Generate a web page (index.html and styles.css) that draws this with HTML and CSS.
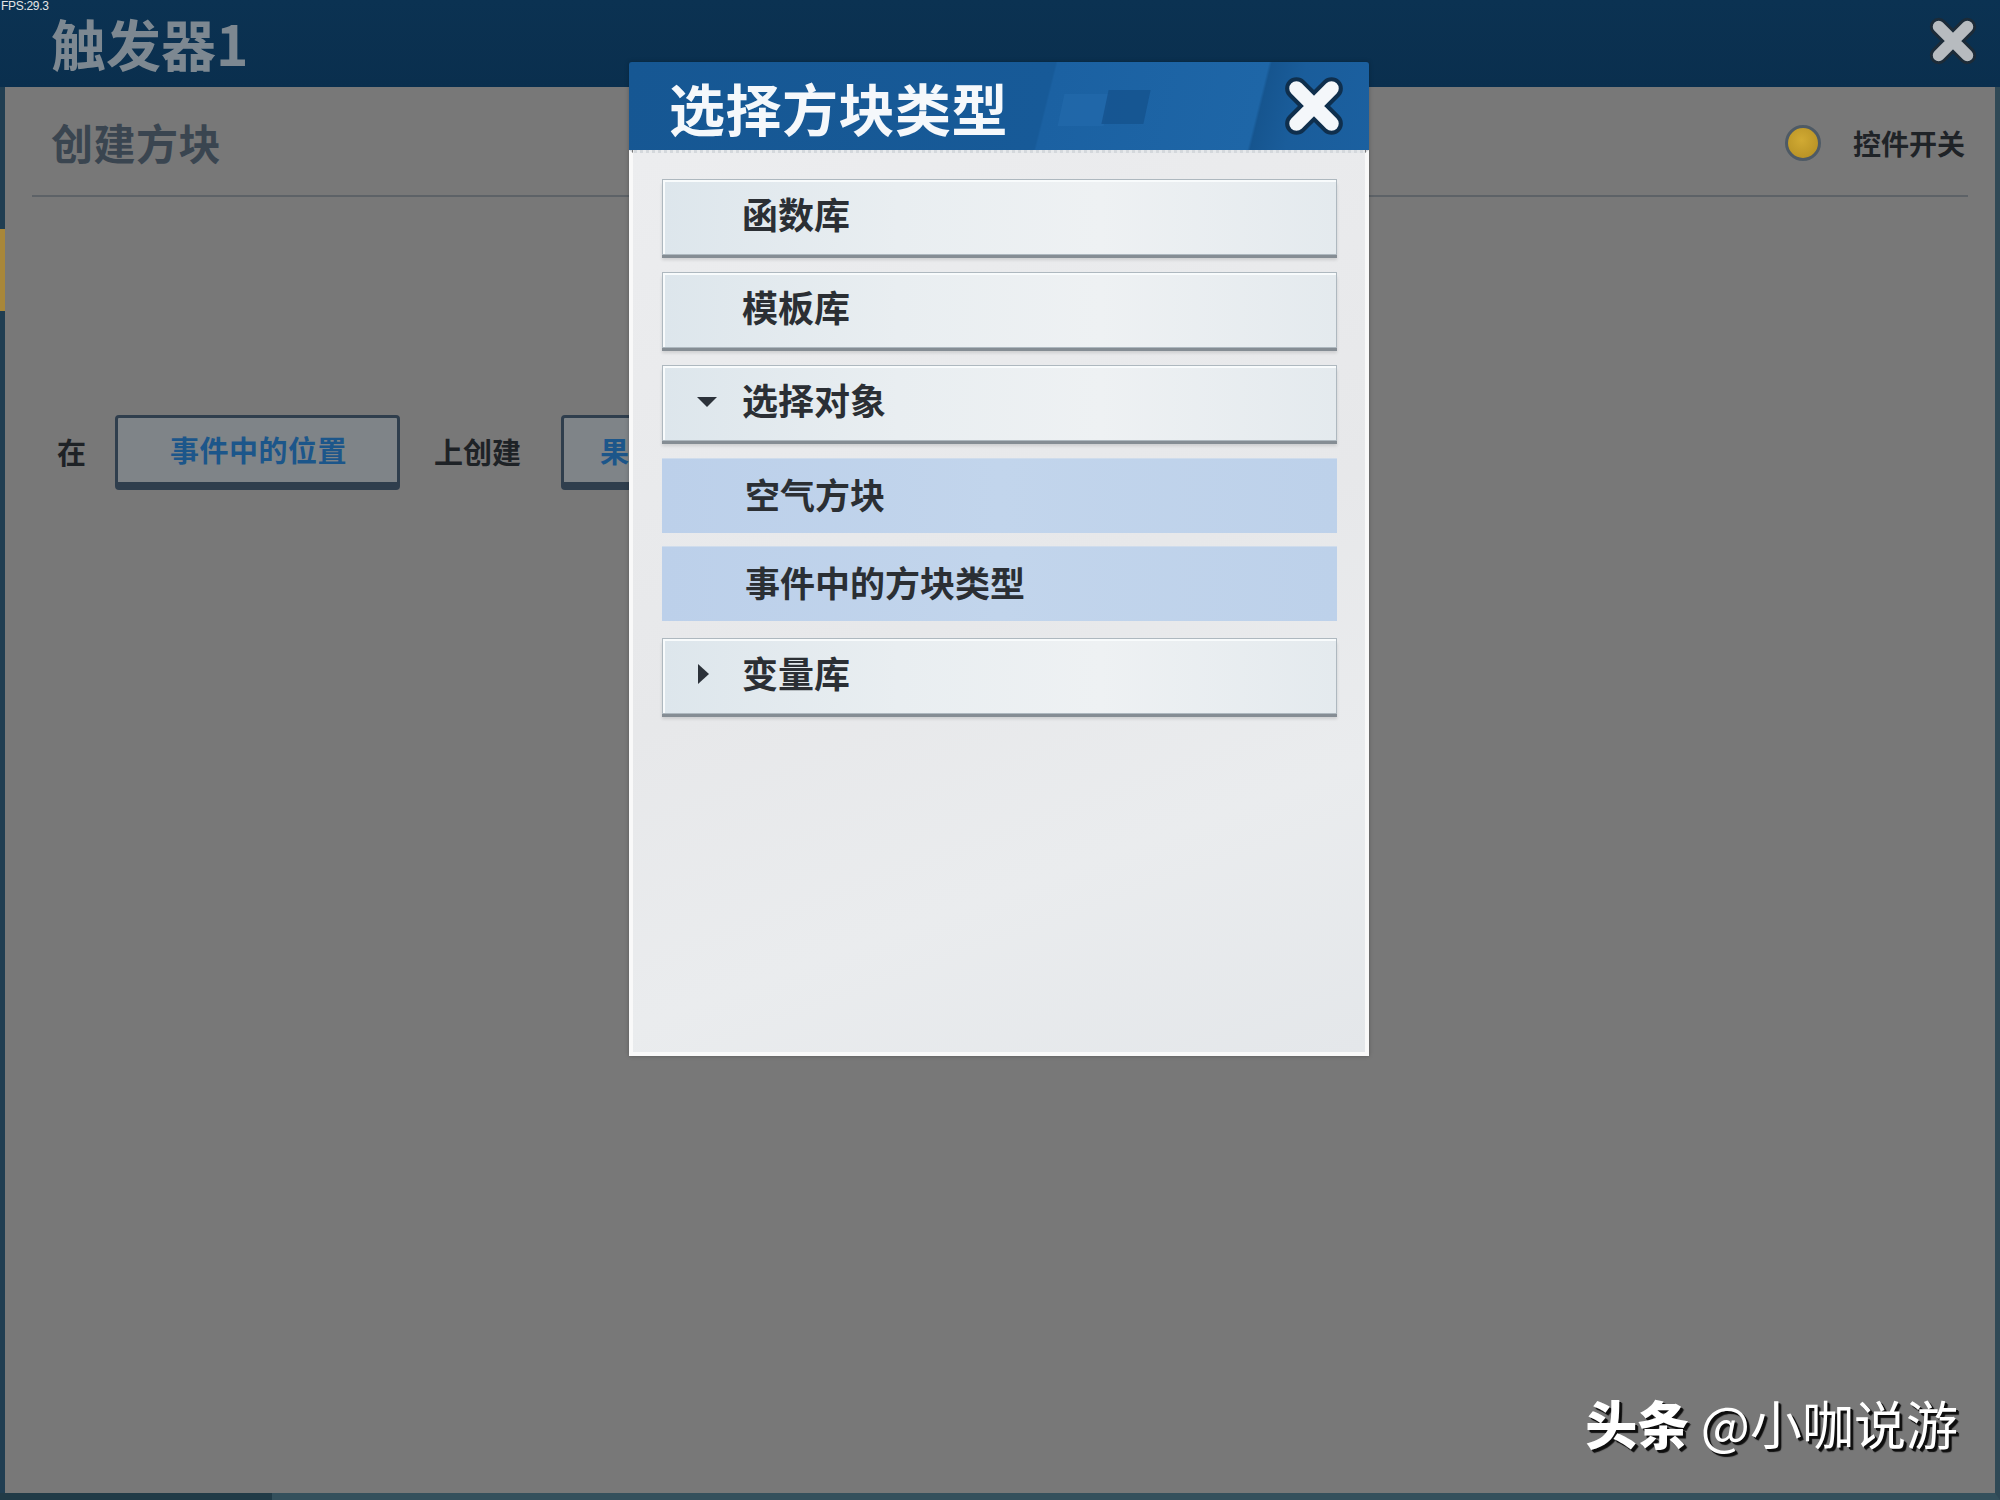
FILE: index.html
```html
<!DOCTYPE html>
<html lang="zh-CN">
<head>
    <meta charset="UTF-8">
    <title>触发器1 - 选择方块类型</title>
    <link rel="stylesheet" href="styles.css">
</head>
<body>
    <div class="app">
        <div class="fps">FPS:29.3</div>

        <header class="topbar">
            <h1>触发器1</h1>
            <span class="close close-dim">
                <svg viewBox="0 0 64 64" width="54" height="54">
                    <path d="M15 15 L49 49 M49 15 L15 49" stroke="#1c2b38" stroke-width="21" stroke-linecap="round"/>
                    <path d="M15 15 L49 49 M49 15 L15 49" stroke="#b7bbbf" stroke-width="14" stroke-linecap="round"/>
                </svg>
            </span>
        </header>

        <main class="panel">
            <div class="panel-head">
                <h2>创建方块</h2>
                <div class="toggle">
                    <span class="dot"></span>
                    <span>控件开关</span>
                </div>
            </div>
            <div class="rule"></div>

            <div class="create-row">
                <span class="word">在</span>
                <span class="slot">事件中的位置</span>
                <span class="word">上创建</span>
                <span class="slot slot-cut">果</span>
            </div>
        </main>

        <!-- block type picker -->
        <div class="modal">
            <div class="modal-head">
                <h3>选择方块类型</h3>
                <span class="close">
                    <svg viewBox="0 0 64 64" width="66" height="66">
                        <path d="M15 15 L49 49 M49 15 L15 49" stroke="#0f2f4d" stroke-width="22" stroke-linecap="round"/>
                        <path d="M15 15 L49 49 M49 15 L15 49" stroke="#f4f7fa" stroke-width="14" stroke-linecap="round"/>
                    </svg>
                </span>
            </div>
            <div class="modal-body">
                <div class="item">函数库</div>
                <div class="item">模板库</div>
                <div class="item">
                    <span class="arrow arrow-down"></span>
                    选择对象
                </div>
                <div class="item sub">空气方块</div>
                <div class="item sub">事件中的方块类型</div>
                <div class="item">
                    <span class="arrow arrow-right"></span>
                    变量库
                </div>
            </div>
        </div>

        <div class="watermark"><b>头条</b> @小咖说游</div>
    </div>
</body>
</html>
```

FILE: styles.css
```css
body {
    margin: 0;
    font-family: "Noto Sans CJK SC", "Noto Sans", sans-serif;
    background: #787878;
}
.app {
    position: relative;
    width: 2000px;
    height: 1500px;
    display: flex;
    flex-direction: column;
    overflow: hidden;
}
.fps {
    position: absolute;
    left: 1px;
    top: -1px;
    font-family: "Liberation Sans", sans-serif;
    font-size: 12px;
    color: #e6e6e6;
    letter-spacing: -0.3px;
}

/* top bar */
.topbar {
    height: 87px;
    flex: none;
    display: flex;
    align-items: center;
    justify-content: space-between;
    padding: 0 20px 0 51px;
    background: linear-gradient(180deg, #0b3252, #0a2f4e);
    box-sizing: border-box;
}
.topbar h1 {
    margin: 0 0 4px;
    font-size: 55px;
    font-weight: 700;
    color: #7d8891;
    letter-spacing: 0;
}
.close {
    display: flex;
}
.close svg {
    display: block;
    fill: none;
}
.close-dim {
    margin-top: -6px;
}

/* panel under the modal */
.panel {
    position: relative;
    flex: 1;
    background: #787878;
    border-left: 5px solid #203e52;
    border-right: 5px solid #2f4956;
    border-bottom: 7px solid #34505c;
    box-sizing: border-box;
}
.panel::before {
    content: "";
    position: absolute;
    left: -5px;
    top: 142px;
    width: 5px;
    height: 82px;
    background: #a8873a;
}
.panel::after {
    content: "";
    position: absolute;
    left: -5px;
    bottom: -7px;
    width: 272px;
    height: 7px;
    background: #213b47;
}
.panel-head {
    height: 108px;
    display: flex;
    align-items: center;
    justify-content: space-between;
    padding: 0 30px 0 46px;
}
.panel-head h2 {
    margin: 0;
    font-size: 42px;
    font-weight: 700;
    color: #3a4550;
    letter-spacing: 0.5px;
}
.toggle {
    display: flex;
    align-items: center;
    gap: 32px;
    font-size: 28px;
    font-weight: 700;
    color: #1f2327;
    margin-top: 4px;
}
.dot {
    width: 30px;
    height: 30px;
    border-radius: 50%;
    background: radial-gradient(circle at 45% 40%, #d1aa33, #b18c22);
    border: 3px solid #4e5a65;
}
.rule {
    height: 2px;
    margin: 0 27px;
    background: #5d6267;
}
.create-row {
    display: flex;
    align-items: center;
    margin-top: 218px;
    padding-left: 52px;
}
.word {
    font-size: 29px;
    font-weight: 700;
    color: #1e2226;
    margin-top: -4px;
}
.slot {
    box-sizing: border-box;
    height: 75px;
    display: flex;
    align-items: center;
    justify-content: center;
    font-size: 29px;
    font-weight: 700;
    color: #1c568a;
    background: #7f8488;
    border: 3px solid #2f3e4d;
    border-bottom-width: 8px;
    border-radius: 4px;
}
.create-row .slot:nth-child(2) {
    width: 285px;
    margin: 0 34px 0 29px;
    padding: 0 0 3px 2px;
    letter-spacing: 0.5px;
}
.slot-cut {
    width: 180px;
    margin-left: 40px;
    justify-content: flex-start;
    padding-left: 36px;
}

/* modal */
.modal {
    position: absolute;
    left: 629px;
    top: 62px;
    width: 740px;
    height: 994px;
    display: flex;
    flex-direction: column;
    box-shadow: 0 0 4px rgba(0, 0, 0, 0.25);
}
.modal-head {
    position: relative;
    height: 88px;
    flex: none;
    display: flex;
    align-items: center;
    justify-content: space-between;
    padding: 0 22px 0 40px;
    background: linear-gradient(104deg, #165793 0%, #175a98 56%, #1b61a2 56.3%, #1e66a7 84%, #16558f 84.4%, #1a5d9b 89%, #1b60a0 100%);
    border-radius: 3px 3px 0 0;
    overflow: hidden;
}
.modal-head::before {
    content: "";
    position: absolute;
    left: 432px;
    top: 32px;
    width: 46px;
    height: 32px;
    background: #226aab;
    transform: skewX(-12deg);
    opacity: 0.7;
}
.modal-head::after {
    content: "";
    position: absolute;
    left: 476px;
    top: 28px;
    width: 42px;
    height: 34px;
    background: #15538d;
    transform: skewX(-12deg);
    opacity: 0.8;
}
.modal-head h3 {
    position: relative;
    z-index: 1;
    margin: 0;
    font-size: 56px;
    font-weight: 700;
    color: #f5f8fb;
    letter-spacing: 0.5px;
}
.modal-head .close {
    position: relative;
    z-index: 1;
}
.modal-body {
    flex: 1;
    display: flex;
    flex-direction: column;
    gap: 17px;
    padding: 26px 28px 0 29px;
    background: linear-gradient(160deg, #ecedef 0%, #e7e8ea 50%, #eaecee 75%, #e4e7ea 100%);
    border: 4px solid #f9f9f9;
    border-top: 3px dotted #d4d8dc;
}
.item {
    box-sizing: border-box;
    height: 76px;
    flex: none;
    display: flex;
    align-items: center;
    position: relative;
    padding: 0 0 9px 79px;
    font-size: 36px;
    font-weight: 700;
    color: #2b2f34;
    background: linear-gradient(90deg, #dde6ec 0%, #e9eef1 35%, #eef1f3 65%, #e4eaee 100%);
    border: 1px solid #aeb8bf;
    box-shadow: inset 2px 2px 0 #f8fbfc, 0 3px 0 #858d94, 0 5px 3px rgba(0, 0, 0, 0.12);
}
.item.sub {
    height: 75px;
    padding: 0 0 6px 83px;
    font-size: 35px;
    border: none;
    border-top: 1px solid #cfdcec;
    background: linear-gradient(90deg, #bcd0ea 0%, #c2d5ec 50%, #bdd1ea 100%);
    box-shadow: none;
}
.item.sub + .item.sub {
    margin-top: -4px;
}
.arrow {
    position: absolute;
    width: 0;
    height: 0;
}
.arrow-down {
    left: 34px;
    top: 31px;
    border-left: 10px solid transparent;
    border-right: 10px solid transparent;
    border-top: 10px solid #2c323a;
}
.arrow-right {
    left: 35px;
    top: 25px;
    border-top: 10px solid transparent;
    border-bottom: 10px solid transparent;
    border-left: 11px solid #2c323a;
}

/* watermark */
.watermark {
    position: absolute;
    right: 42px;
    bottom: 40px;
    font-size: 52px;
    color: #ffffff;
    letter-spacing: 0;
    text-shadow: 2px 2px 0 #0e0e0e, 3px 3px 1px #111;
}
.watermark b {
    font-weight: 900;
}
```
